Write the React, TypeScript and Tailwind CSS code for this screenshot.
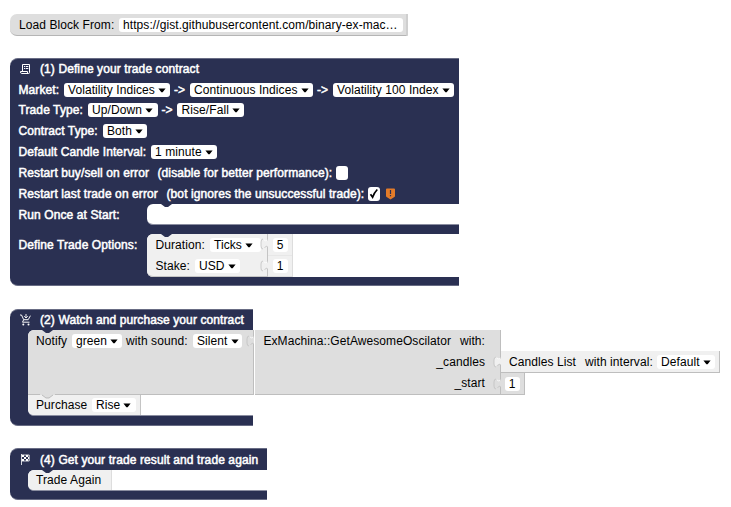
import React from "react";

function Label({ w, children, light = false }: { w: string; children?: React.ReactNode; light?: boolean }) {
  return (
    <span
      className={`${w} shrink-0 whitespace-pre leading-[14px] ${
        light ? "tracking-[0.1px] text-white [-webkit-text-stroke:0.5px_white]" : "tracking-[0.08px] text-black"
      }`}
    >
      {children}
    </span>
  );
}

function Field({ w, children, arrow = true }: { w: string; children?: React.ReactNode; arrow?: boolean }) {
  return (
    <span className={`${w} flex h-[14px] shrink-0 items-center rounded-[3px] bg-white pl-[4.5px] whitespace-pre tracking-[0.08px] text-black`}>
      <span className="leading-[14px]">{children}</span>
      {arrow && (
        <svg className="mt-px ml-[3px] shrink-0" width="8" height="5" viewBox="0 0 8 5">
          <path d="M0.4 0.4H7.6L4.6 4.2H3.4Z" fill="#000" />
        </svg>
      )}
    </span>
  );
}

function Num({ children }: { children: React.ReactNode }) {
  return (
    <span className="flex h-[14px] w-[15px] items-center justify-center rounded-[3px] bg-white leading-[14px]">{children}</span>
  );
}

function Row({ children, h = "h-[21px]" }: { children: React.ReactNode; h?: string }) {
  return <div className={`flex items-center pl-[8.5px] ${h}`}>{children}</div>;
}

function Notch({ color = "#2a3052", edge = "none" }: { color?: string; edge?: string }) {
  return (
    <svg className="absolute -top-px left-[11px]" width="17" height="5" viewBox="0 0 17 5">
      <path d="M1 0V1H3L7 4H10L14 1H16V0Z" fill={color} />
      <path d="M3 1L7 4H10L14 1" fill="none" stroke={edge} strokeWidth="0.7" />
    </svg>
  );
}

function Socket({ className, fill = "#dedede" }: { className: string; fill?: string }) {
  return (
    <svg className={`absolute ${className}`} width="8" height="14" viewBox="0 0 8 14">
      <path d="M8 3Q7 5 4 3Q2 0 1 4V9Q2 14 4 10Q7 8 8 10Z" fill={fill} />
      <path d="M3 2Q1 2 1 5V9Q1 12 3 12M4.5 10.5L7 9" fill="none" stroke="#c0c0c0" strokeWidth="0.8" />
      <path d="M4 3Q6 5 7.5 3" fill="none" stroke="#fff" strokeWidth="0.8" />
    </svg>
  );
}

const shell = "rounded-l-[8px] bg-[#2a3052] border-t border-b border-[#686c84]";

export default function App() {
  return (
    <main className="h-[507px] w-[731px] overflow-hidden bg-white pl-[10px] pt-[14px] font-['Liberation_Sans',Arial,sans-serif] text-[12px]">
      <section className="flex h-[22px] w-[398px] items-center rounded-l-[7px] border-r-2 border-b border-r-[#cfcfcf] border-b-[#b5b5b5] bg-[#dedede] pl-[9px]">
        <Label w="w-[99.5px]">Load Block From:</Label>
        <Field w="w-[284px]" arrow={false}>https://gist.githubusercontent.com/binary-ex-mac…</Field>
      </section>

      <section className={`mt-[22px] h-[228px] w-[449px] ${shell}`}>
        <div className="flex h-[20px] items-center">
          <svg className="ml-[10px] mr-[9px] shrink-0" width="11" height="12" viewBox="0 0 11 12" fill="none" stroke="#fff">
            <path d="M2.5 8V1.5H9.5V9.5Q9.5 10.5 8.5 10.5H1.5Q.5 10.5 .5 8.5H7.5V10" />
            <path d="M4 3.5H5M5.7 3.5H8.3M4 5.5H5M5.7 5.5H8.3" />
          </svg>
          <Label w="w-[170px]" light>(1) Define your trade contract</Label>
        </div>
        <Row>
          <Label w="w-[45px]" light>Market:</Label>
          <Field w="w-[106.5px]">Volatility Indices</Field>
          <span className="w-[4px]" />
          <Label w="w-[15.5px]" light>{"->"}</Label>
          <Field w="w-[123.5px]">Continuous Indices</Field>
          <span className="w-[4px]" />
          <Label w="w-[15.5px]" light>{"->"}</Label>
          <Field w="w-[121.5px]">Volatility 100 Index</Field>
        </Row>
        <Row h="h-[20px]">
          <Label w="w-[69px]" light>Trade Type:</Label>
          <Field w="w-[70px]">Up/Down</Field>
          <span className="w-[4px]" />
          <Label w="w-[15.5px]" light>{"->"}</Label>
          <Field w="w-[67px]">Rise/Fall</Field>
        </Row>
        <Row>
          <Label w="w-[84px]" light>Contract Type:</Label>
          <Field w="w-[44.5px]">Both</Field>
        </Row>
        <Row>
          <Label w="w-[132px]" light>Default Candle Interval:</Label>
          <Field w="w-[66.5px]">1 minute</Field>
        </Row>
        <Row>
          <Label w="w-[139px]" light>Restart buy/sell on error</Label>
          <Label w="w-[178.5px]" light>(disable for better performance):</Label>
          <span className="h-[14px] w-[12px] rounded-[3px] bg-white" />
        </Row>
        <Row>
          <Label w="w-[148px]" light>Restart last trade on error</Label>
          <Label w="w-[201.5px]" light>(bot ignores the unsuccessful trade):</Label>
          <span className="flex h-[14px] w-[12px] items-center justify-center rounded-[3px] bg-white">
            <svg width="10" height="11" viewBox="0 0 10 11">
              <path d="M1.5 6.2L3.6 9.2Q5.3 4.5 8.3 1.5" fill="none" stroke="#000" strokeWidth="1.7" />
            </svg>
          </span>
          <svg className="ml-[6px]" width="9" height="12" viewBox="0 0 9 12">
            <path d="M1 .5H8Q9 .5 9 1.5V8Q9 9 8 9.3L4.5 11.5L1 9.3Q0 9 0 8V1.5Q0 .5 1 .5Z" fill="#e37b29" />
            <path d="M4.5 2V6M4.5 7V8.3" stroke="#2a3052" strokeWidth="1.2" />
          </svg>
        </Row>
        <div className="flex h-[21px]">
          <div className="flex w-[137px] items-center pl-[8.5px]"><Label w="w-[120px]" light>Run Once at Start:</Label></div>
          <div className="relative flex-1 rounded-l-[6px] border-b border-[#8a8da0] bg-white"><Notch /></div>
        </div>
        <div className="mt-[9px] flex h-[43px]">
          <div className="w-[137px] pl-[8.5px] pt-[2px]"><Label w="w-[120px]" light>Define Trade Options:</Label></div>
          <div className="flex flex-1 rounded-l-[6px] bg-white">
            <div className="relative flex w-[121px] flex-col rounded-l-[6px] border-r border-b border-[#c4c4c4] bg-[#f0f0f0]">
              <Notch />
              <Row h="h-[22px]"><Label w="w-[54px]">Duration:</Label><Field w="w-[51px]">Ticks</Field></Row>
              <Row h="h-[20px]"><Label w="w-[39px]">Stake:</Label><Field w="w-[45px]">USD</Field></Row>
              <Socket className="left-[113px] top-[3px]" fill="#f0f0f0" />
              <Socket className="left-[113px] top-[25px]" fill="#f0f0f0" />
            </div>
            <div className="flex h-[43px] w-[24.5px] flex-col border-r border-b border-[#dddddd] bg-[#f0f0f0]">
              <div className="flex h-[22px] items-center border-b border-[#e7e7e7] pl-[4.5px]"><Num>5</Num></div>
              <div className="flex h-[20px] items-center pl-[4.5px]"><Num>1</Num></div>
            </div>
          </div>
        </div>
      </section>

      <section className={`mt-[23px] h-[117px] w-[243px] ${shell}`}>
        <div className="flex h-[20px] items-center">
          <svg className="ml-[10px] mr-[9px] shrink-0" width="11" height="12" viewBox="0 0 11 12" fill="none" stroke="#fff">
            <path d="M0 1H1.5L3.7 5.7H8.2L10.4 1.7M3.7 5.7L2.5 8.2H9.5" strokeWidth=".95" />
            <path d="M6 0V3.8M4.2 2.2L6 4L7.8 2.2" strokeWidth=".9" />
            <circle cx="3.3" cy="10.4" r="1" fill="#fff" stroke="none" />
            <circle cx="8.5" cy="10.4" r="1" fill="#fff" stroke="none" />
          </svg>
          <Label w="w-[210px]" light>(2) Watch and purchase your contract</Label>
        </div>
        <div className="ml-[17.5px] flex h-[86px] flex-col rounded-l-[6px] border-b border-[#8a8da0] bg-white">
          <div className="flex h-[65px]">
            <div className="relative w-[226.5px] shrink-0 rounded-tl-[6px] border-r border-b border-[#bebebe] bg-[#dedede]">
              <Notch />
              <Row>
                <Label w="w-[35.5px]">Notify</Label>
                <Field w="w-[50.5px]">green</Field>
                <span className="w-[4px]" />
                <Label w="w-[66.5px]">with sound:</Label>
                <Field w="w-[49.5px]">Silent</Field>
              </Row>
              <Socket className="right-[-1px] top-[4px]" />
            </div>
            <div className="relative ml-px w-[246px] shrink-0 border-r border-b border-[#bebebe] bg-[#dedede]">
              <div className="flex h-[21px] items-center justify-end pr-[15px]">
                <Label w="w-[196.5px]">ExMachina::GetAwesomeOscilator</Label>
                <Label w="w-auto">with:</Label>
              </div>
              <div className="flex h-[21px] items-center justify-end pr-[15px]"><Label w="w-auto">_candles</Label></div>
              <div className="flex h-[22px] items-center justify-end pr-[15px]"><Label w="w-auto">_start</Label></div>
              <Socket className="right-[-1px] top-[25px]" fill="#f0f0f0" />
              <Socket className="right-[-1px] top-[47px]" />
            </div>
            <div className="w-[219px] shrink-0 pt-[21px]">
              <div className="flex h-[22px] items-center border-r border-b border-[#bebebe] bg-[#f0f0f0] pl-[8px]">
                <Label w="w-[76px]">Candles List</Label>
                <Label w="w-[71.5px]">with interval:</Label>
                <Field w="w-[58.5px]">Default</Field>
              </div>
              <div className="flex h-[22px] w-[24px] items-center border-r border-b border-[#bebebe] bg-[#dedede] pl-[3.5px]"><Num>1</Num></div>
            </div>
          </div>
          <div className="relative h-[20px] w-[113.5px] rounded-bl-[6px] border-r border-[#c4c4c4] bg-[#f0f0f0]">
            <Notch color="#dedede" edge="#aaaaaa" />
            <Row h="h-[20px]"><Label w="w-[55.5px]">Purchase</Label><Field w="w-[44px]">Rise</Field></Row>
          </div>
        </div>
      </section>

      <section className={`mt-[22px] h-[52px] w-[257px] ${shell}`}>
        <div className="flex h-[21px] items-center">
          <svg className="ml-[10px] mr-[9px] shrink-0" width="11" height="12" viewBox="0 0 11 12" fill="none" stroke="#fff">
            <path d="M1.5 0V11M1.5 1H9.2V7H1.5" strokeWidth=".8" />
            <path d="M2 1H4V3H2ZM6 1H8V3H6ZM4 3H6V5H4ZM8 3H9V5H8ZM2 5H4V7H2ZM6 5H8V7H6Z" fill="#fff" stroke="none" />
          </svg>
          <Label w="w-[225px]" light>(4) Get your trade result and trade again</Label>
        </div>
        <div className="ml-[17.5px] h-[21px] rounded-l-[6px] border-b border-[#8a8da0] bg-white">
          <div className="relative h-[20px] w-[84px] rounded-l-[6px] border-r border-[#dddddd] bg-[#f0f0f0]">
            <Notch />
            <Row h="h-[20px]"><Label w="w-auto">Trade Again</Label></Row>
          </div>
        </div>
      </section>
    </main>
  );
}
